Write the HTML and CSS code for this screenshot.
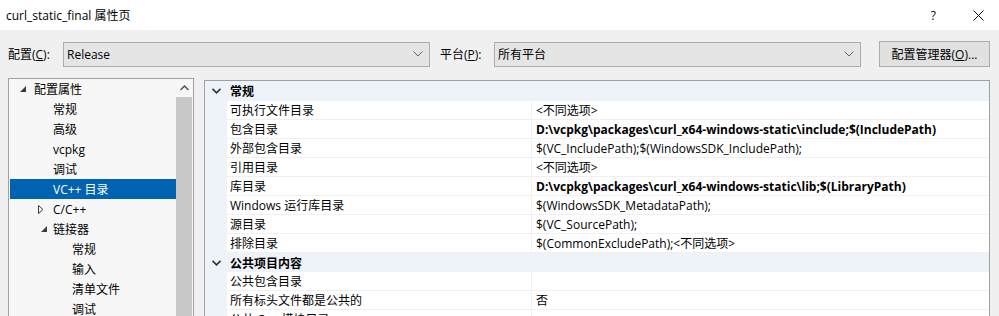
FILE: index.html
```html
<!DOCTYPE html>
<html lang="zh-CN">
<head>
<meta charset="UTF-8" />
<title>curl_static_final 属性页</title>
<link rel="stylesheet" href="styles.css">
</head>
<body>
<header class="titlebar">
  <span class="title">curl_static_final 属性页</span>
  <span class="title-help">?</span>
  <svg class="title-close" width="11" height="11" viewBox="0 0 11 11"><path d="M0.5 0.5L10.5 10.5M10.5 0.5L0.5 10.5" stroke="#111" stroke-width="1" fill="none"/></svg>
</header>

<main class="dialog">
  <div class="toolbar">
    <label class="tb-label">配置(<u>C</u>):</label>
    <div class="combo">
      <span>Release</span>
      <svg width="10" height="6" viewBox="0 0 10 6"><polyline points="0.5,0.5 5,5 9.5,0.5" stroke="#666" fill="none"/></svg>
    </div>
    <label class="tb-label tb-label2">平台(<u>P</u>):</label>
    <div class="combo">
      <span>所有平台</span>
      <svg width="10" height="6" viewBox="0 0 10 6"><polyline points="0.5,0.5 5,5 9.5,0.5" stroke="#666" fill="none"/></svg>
    </div>
    <button class="btn">配置管理器(<u>O</u>)...</button>
  </div>

  <div class="panes">
    <div class="tree">
      <ul class="tree-items">
        <li class="lvl0"><svg class="tri" width="6" height="6" viewBox="0 0 6 6"><polygon points="6,0 6,6 0,6" fill="#3c3c3c"/></svg>配置属性</li>
        <li class="lvl1">常规</li>
        <li class="lvl1">高级</li>
        <li class="lvl1">vcpkg</li>
        <li class="lvl1">调试</li>
        <li class="lvl1 selected">VC++ 目录</li>
        <li class="lvl1"><svg class="tri tri-open" width="6" height="9" viewBox="0 0 6 9"><polygon points="0.5,0.5 5,4.5 0.5,8.5" fill="none" stroke="#3c3c3c"/></svg>C/C++</li>
        <li class="lvl1"><svg class="tri" width="6" height="6" viewBox="0 0 6 6"><polygon points="6,0 6,6 0,6" fill="#3c3c3c"/></svg>链接器</li>
        <li class="lvl2">常规</li>
        <li class="lvl2">输入</li>
        <li class="lvl2">清单文件</li>
        <li class="lvl2">调试</li>
      </ul>
      <div class="scrollbar">
        <div class="sb-arrow"><svg width="9" height="6" viewBox="0 0 9 6"><polyline points="0.5,5 4.5,1 8.5,5" stroke="#555" stroke-width="1.5" fill="none"/></svg></div>
        <div class="sb-thumb"></div>
      </div>
    </div>

    <div class="grid">
      <div class="cat cat-first"><span class="gut"><svg width="9" height="6" viewBox="0 0 9 6"><polyline points="0.5,0.8 4.5,4.8 8.5,0.8" stroke="#333" stroke-width="1.6" fill="none"/></svg></span><span class="cat-name">常规</span></div>
      <div class="row"><span class="gut"></span><span class="name">可执行文件目录</span><span class="val">&lt;不同选项&gt;</span></div>
      <div class="row"><span class="gut"></span><span class="name">包含目录</span><span class="val bold">D:\vcpkg\packages\curl_x64-windows-static\include;$(IncludePath)</span></div>
      <div class="row"><span class="gut"></span><span class="name">外部包含目录</span><span class="val">$(VC_IncludePath);$(WindowsSDK_IncludePath);</span></div>
      <div class="row"><span class="gut"></span><span class="name">引用目录</span><span class="val">&lt;不同选项&gt;</span></div>
      <div class="row"><span class="gut"></span><span class="name">库目录</span><span class="val bold">D:\vcpkg\packages\curl_x64-windows-static\lib;$(LibraryPath)</span></div>
      <div class="row"><span class="gut"></span><span class="name">Windows 运行库目录</span><span class="val">$(WindowsSDK_MetadataPath);</span></div>
      <div class="row"><span class="gut"></span><span class="name">源目录</span><span class="val">$(VC_SourcePath);</span></div>
      <div class="row"><span class="gut"></span><span class="name">排除目录</span><span class="val">$(CommonExcludePath);&lt;不同选项&gt;</span></div>
      <div class="cat"><span class="gut"><svg width="9" height="6" viewBox="0 0 9 6"><polyline points="0.5,0.8 4.5,4.8 8.5,0.8" stroke="#333" stroke-width="1.6" fill="none"/></svg></span><span class="cat-name">公共项目内容</span></div>
      <div class="row"><span class="gut"></span><span class="name">公共包含目录</span><span class="val"></span></div>
      <div class="row"><span class="gut"></span><span class="name">所有标头文件都是公共的</span><span class="val">否</span></div>
      <div class="row"><span class="gut"></span><span class="name">公共 C++ 模块目录</span><span class="val"></span></div>
    </div>
  </div>
</main>
</body>
</html>
```

FILE: styles.css
```css
* {
  box-sizing: border-box;
}
html, body {
  height: 316px;
  overflow: hidden;
}
body {
  margin: 0;
  background: #f0f0f0;
  font-family: "Open Sans", "Noto Sans CJK SC", sans-serif;
  font-size: 12px;
  color: #000;
}
ul {
  list-style: none;
  margin: 0;
  padding: 0;
}

/* title bar */
.titlebar {
  height: 30px;
  background: #fff;
  display: flex;
  align-items: center;
  padding: 0 15px 0 6px;
}
.title {
  flex-grow: 1;
}
.title-help {
  font-size: 12px;
  margin-right: 37px;
}
.title-close {
  display: block;
}

/* toolbar */
.dialog {
  padding: 11px 9px 0 8px;
}
.toolbar {
  display: flex;
  align-items: center;
  height: 26px;
}
.tb-label {
  width: 55px;
  flex-shrink: 0;
}
.tb-label2 {
  width: 54px;
  margin-left: 10px;
}
.combo {
  width: 367px;
  height: 25px;
  background: #e5e5e5;
  border: 1px solid #adadad;
  display: flex;
  align-items: center;
  justify-content: space-between;
  padding: 0 6px 0 3px;
}
.combo svg {
  display: block;
}
.btn {
  margin-left: 18px;
  width: 111px;
  height: 26px;
  background: #e1e1e1;
  border: 1px solid #adadad;
  font: inherit;
  padding: 0;
  color: #000;
}

/* panes */
.panes {
  display: flex;
  margin-top: 11px;
  gap: 10px;
}
.tree {
  width: 186px;
  height: 260px;
  border: 1px solid #a0a0a0;
  background: #f7f7f7;
  display: flex;
  padding-left: 1px;
}
.tree-items {
  width: 166px;
}
.tree-items li {
  height: 20px;
  display: flex;
  align-items: center;
  position: relative;
  white-space: nowrap;
}
.lvl0 { padding-left: 24px; }
.lvl1 { padding-left: 43px; }
.lvl2 { padding-left: 62px; }
.tri {
  position: absolute;
  top: 7px;
}
.lvl0 .tri { left: 10px; }
.lvl1 .tri { left: 31px; }
.lvl1 .tri-open { left: 28px; top: 6px; }
.selected {
  background: #0063b1;
  color: #fff;
}
.scrollbar {
  width: 17px;
  padding: 0 1px 0 0;
  display: flex;
  flex-direction: column;
}
.sb-arrow {
  height: 18px;
  display: flex;
  align-items: center;
  justify-content: center;
}
.sb-thumb {
  flex-grow: 1;
  background: #c8c8c8;
}

/* property grid */
.grid {
  width: 786px;
  height: 260px;
  margin-top: 2px;
  border: 1px solid #a0a0a0;
  background: #fff;
}
.cat, .row {
  display: grid;
  grid-template-columns: 22px 305px 1fr;
  height: 19px;
  align-items: stretch;
}
.cat {
  background: #eef2f9;
}
.cat-first {
  height: 20px;
}
.cat-name {
  grid-column: 2 / 4;
  font-weight: 700;
  padding-left: 3px;
  display: flex;
  align-items: center;
}
.gut {
  background: #eef2f9;
  display: flex;
  align-items: center;
  justify-content: center;
}
.name, .val {
  display: flex;
  align-items: center;
  border-bottom: 1px solid #f0f0f0;
  white-space: nowrap;
  overflow: hidden;
}
.name {
  padding-left: 3px;
  border-right: 1px solid #f0f0f0;
}
.val {
  padding-left: 4px;
}
.bold {
  font-weight: 700;
}
```
